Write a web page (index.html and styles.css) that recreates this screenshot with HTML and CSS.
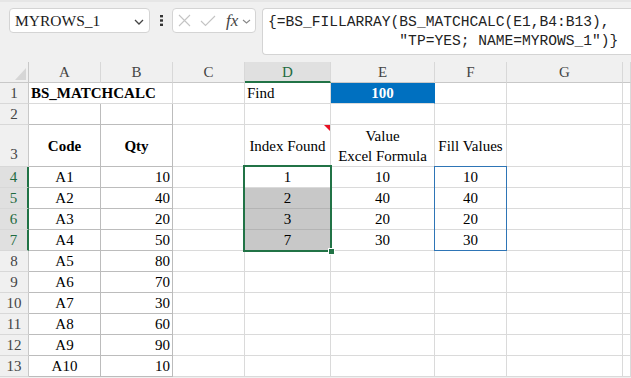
FILE: index.html
```html
<!DOCTYPE html>
<html lang="en">
<head>
    <meta charset="UTF-8">
    <title>MYROWS_1 - BS_MATCHCALC</title>
    <link rel="stylesheet" href="styles.css">
</head>
<body>
    <div class="toolbar">
        <div class="namebox">
            <span class="name">MYROWS_1</span>
            <svg class="chev" width="10" height="6" viewBox="0 0 10 6"><path d="M1 1 L5 5 L9 1" fill="none" stroke="#444" stroke-width="1.3"/></svg>
        </div>
        <div class="dots">
            <svg width="3" height="11" viewBox="0 0 3 11"><rect x="0" y="0" width="3" height="2.4" fill="#333"/><rect x="0" y="4.3" width="3" height="2.4" fill="#333"/><rect x="0" y="8.6" width="3" height="2.4" fill="#333"/></svg>
        </div>
        <div class="fxbox">
            <svg class="x-ico" width="13" height="13" viewBox="0 0 13 13"><path d="M1 1 L12 12 M12 1 L1 12" stroke="#c4c4c4" stroke-width="1.1"/></svg>
            <svg class="ok-ico" width="16" height="12" viewBox="0 0 16 12"><path d="M1 6 L5.5 10.5 L15 1" fill="none" stroke="#c4c4c4" stroke-width="1.1"/></svg>
            <span class="fx">fx</span>
            <svg class="chev-s" width="9" height="5" viewBox="0 0 9 5"><path d="M1 1 L4.5 4 L8 1" fill="none" stroke="#888" stroke-width="1.1"/></svg>
        </div>
        <div class="formula"><pre>{=BS_FILLARRAY(BS_MATCHCALC(E1,B4:B13),
               "TP=YES; NAME=MYROWS_1")}</pre></div>
    </div>

    <div class="sheet">
        <!-- column headers -->
        <div class="h corner"><span class="tri"></span></div>
        <div class="h">A</div>
        <div class="h">B</div>
        <div class="h">C</div>
        <div class="h on-col">D</div>
        <div class="h">E</div>
        <div class="h">F</div>
        <div class="h">G</div>
        <div class="h"></div>

        <!-- row 1 -->
        <div class="rh">1</div>
        <div class="c span2 b">BS_MATCHCALC</div>
        <div class="c"></div>
        <div class="c">Find</div>
        <div class="c ctr b blue">100</div>
        <div class="c"></div>
        <div class="c"></div>
        <div class="c"></div>

        <!-- row 2 -->
        <div class="rh">2</div>
        <div class="c dk"></div>
        <div class="c dk"></div>
        <div class="c"></div>
        <div class="c"></div>
        <div class="c"></div>
        <div class="c"></div>
        <div class="c"></div>
        <div class="c"></div>

        <!-- row 3 -->
        <div class="rh tall">3</div>
        <div class="c dk ctr b">Code</div>
        <div class="c dk ctr b">Qty</div>
        <div class="c"></div>
        <div class="c ctr note">Index Found</div>
        <div class="c ctr wrap">Value<br>Excel Formula</div>
        <div class="c ctr">Fill Values</div>
        <div class="c"></div>
        <div class="c"></div>

        <!-- rows 4-7 -->
        <div class="rh on-row">4</div>
        <div class="c dk ctr">A1</div>
        <div class="c dk r">10</div>
        <div class="c"></div>
        <div class="c ctr">1</div>
        <div class="c ctr">10</div>
        <div class="c ctr">10</div>
        <div class="c"></div>
        <div class="c"></div>

        <div class="rh on-row">5</div>
        <div class="c dk ctr">A2</div>
        <div class="c dk r">40</div>
        <div class="c"></div>
        <div class="c ctr grey">2</div>
        <div class="c ctr">40</div>
        <div class="c ctr">40</div>
        <div class="c"></div>
        <div class="c"></div>

        <div class="rh on-row">6</div>
        <div class="c dk ctr">A3</div>
        <div class="c dk r">20</div>
        <div class="c"></div>
        <div class="c ctr grey">3</div>
        <div class="c ctr">20</div>
        <div class="c ctr">20</div>
        <div class="c"></div>
        <div class="c"></div>

        <div class="rh on-row">7</div>
        <div class="c dk ctr">A4</div>
        <div class="c dk r">50</div>
        <div class="c"></div>
        <div class="c ctr grey">7</div>
        <div class="c ctr">30</div>
        <div class="c ctr">30</div>
        <div class="c"></div>
        <div class="c"></div>

        <!-- rows 8-13 -->
        <div class="rh">8</div>
        <div class="c dk ctr">A5</div>
        <div class="c dk r">80</div>
        <div class="c"></div><div class="c"></div><div class="c"></div><div class="c"></div><div class="c"></div><div class="c"></div>

        <div class="rh">9</div>
        <div class="c dk ctr">A6</div>
        <div class="c dk r">70</div>
        <div class="c"></div><div class="c"></div><div class="c"></div><div class="c"></div><div class="c"></div><div class="c"></div>

        <div class="rh">10</div>
        <div class="c dk ctr">A7</div>
        <div class="c dk r">30</div>
        <div class="c"></div><div class="c"></div><div class="c"></div><div class="c"></div><div class="c"></div><div class="c"></div>

        <div class="rh">11</div>
        <div class="c dk ctr">A8</div>
        <div class="c dk r">60</div>
        <div class="c"></div><div class="c"></div><div class="c"></div><div class="c"></div><div class="c"></div><div class="c"></div>

        <div class="rh">12</div>
        <div class="c dk ctr">A9</div>
        <div class="c dk r">90</div>
        <div class="c"></div><div class="c"></div><div class="c"></div><div class="c"></div><div class="c"></div><div class="c"></div>

        <div class="rh">13</div>
        <div class="c dk ctr">A10</div>
        <div class="c dk r">10</div>
        <div class="c"></div><div class="c"></div><div class="c"></div><div class="c"></div><div class="c"></div><div class="c"></div>

        <!-- selection overlays -->
        <div class="sel-range"><span class="handle"></span></div>
        <div class="ref-range"></div>
    </div>
</body>
</html>
```

FILE: styles.css
```css
/* Sheet view */
body {
    margin: 0;
    width: 631px;
    height: 378px;
    overflow: hidden;
    background-color: #f0f0f0;
    font-family: "Liberation Serif", "Times New Roman", serif;
    color: #000;
}

/* formula bar */
.toolbar {
    height: 62px;
    box-sizing: border-box;
    display: flex;
    align-items: flex-start;
    padding: 6px 0 0 9px;
    border-top: 2px solid #e6e6e6;
}

.namebox {
    flex-shrink: 0;
    width: 141px;
    height: 25px;
    box-sizing: border-box;
    border: 1px solid #d4d4d4;
    border-radius: 4px;
    background-color: #fff;
    display: flex;
    align-items: center;
    justify-content: space-between;
    padding: 0 5px 0 5px;
}

.namebox .name {
    font-size: 15.5px;
    color: #1a1a1a;
}

.namebox .chev {
    margin-top: 2px;
}

.dots {
    flex-shrink: 0;
    width: 22px;
    height: 25px;
    display: flex;
    align-items: center;
    justify-content: center;
}

.fxbox {
    flex-shrink: 0;
    width: 84px;
    height: 25px;
    box-sizing: border-box;
    border: 1px solid #d4d4d4;
    border-radius: 4px;
    background-color: #fff;
    display: flex;
    align-items: center;
    padding-left: 5px;
}

.fxbox .ok-ico {
    margin-left: 9px;
}

.fxbox .fx {
    margin-left: 10px;
    font-style: italic;
    font-size: 17px;
    color: #444;
    line-height: 1;
}

.fxbox .chev-s {
    margin-left: 4px;
    margin-top: 1px;
}

.formula {
    flex: 1;
    margin-left: 6px;
    height: 47px;
    box-sizing: border-box;
    border: 1px solid #d4d4d4;
    border-right: none;
    border-radius: 4px 0 0 4px;
    background-color: #fff;
}

.formula pre {
    margin: 0;
    padding: 4px 0 0 5px;
    font-family: "Liberation Mono", "DejaVu Sans Mono", monospace;
    font-size: 14.6px;
    line-height: 19px;
    color: #222;
}

/* grid */
.sheet {
    position: relative;
    display: grid;
    grid-template-columns: 29px 72px 72px 72px 86px 104px 72px 116px 8px;
    grid-template-rows: 21px 21px 21px 42px repeat(10, 21px);
    font-size: 15px;
}

.sheet > div {
    box-sizing: border-box;
    border-right: 1px solid #dadada;
    border-bottom: 1px solid #dadada;
    white-space: nowrap;
    overflow: hidden;
}

.h {
    background-color: #f0f0f0;
    color: #444;
    text-align: center;
    line-height: 20px;
    border-bottom-color: #c8c8c8 !important;
    border-right-color: #d8d8d8 !important;
}

.h.on-col {
    background-color: #e0e0e0;
    color: #1e6b41;
    border-bottom: 2px solid #217346 !important;
}

.corner {
    position: relative;
    border-right-color: #c8c8c8 !important;
}

.corner .tri {
    position: absolute;
    right: 2px;
    bottom: 2px;
    width: 0;
    height: 0;
    border-left: 11px solid transparent;
    border-bottom: 12px solid #d6d6d6;
}

.rh {
    background-color: #f0f0f0;
    color: #444;
    text-align: center;
    line-height: 20px;
    border-right-color: #c8c8c8 !important;
    border-bottom-color: #d8d8d8 !important;
}

.rh.tall {
    line-height: 41px;
    padding-top: 9px;
}

.rh.on-row {
    background-color: #e0e0e0;
    color: #1e6b41;
    border-right: 2px solid #217346 !important;
}

.c {
    background-color: #fff;
    line-height: 20px;
    padding: 0 2px;
    display: flex;
    align-items: center;
}

.c.span2 {
    grid-column: span 2;
}

.c.ctr {
    justify-content: center;
    text-align: center;
}

.c.r {
    justify-content: flex-end;
}

.c.b {
    font-weight: bold;
}

.c.dk {
    border-right-color: #bcbcbc;
    border-bottom-color: #bcbcbc;
}

.c.blue {
    background-color: #0070c0;
    color: #fff;
    border-right-color: #0070c0;
}

.c.grey {
    background-color: #c8c8c8;
    border-bottom-color: #b4b4b4;
}

.c.wrap {
    line-height: 20px;
}

.c.note {
    position: relative;
}

.c.note::after {
    content: "";
    position: absolute;
    top: 0;
    right: 0;
    border-left: 6px solid transparent;
    border-top: 6px solid #e81123;
}

/* selection overlays */
.sel-range {
    position: absolute;
    left: 243px;
    top: 103px;
    width: 89px;
    height: 87px;
    box-sizing: border-box;
    border: 2px solid #217346 !important;
}

.sel-range .handle {
    position: absolute;
    right: -5px;
    bottom: -5px;
    width: 5px;
    height: 5px;
    background-color: #217346;
    border: 1px solid #fff;
}

.sheet > .sel-range {
    overflow: visible;
}

.ref-range {
    position: absolute;
    left: 434px;
    top: 104px;
    width: 73px;
    height: 85px;
    box-sizing: border-box;
    border: 1px solid #2e75b6 !important;
}
```
